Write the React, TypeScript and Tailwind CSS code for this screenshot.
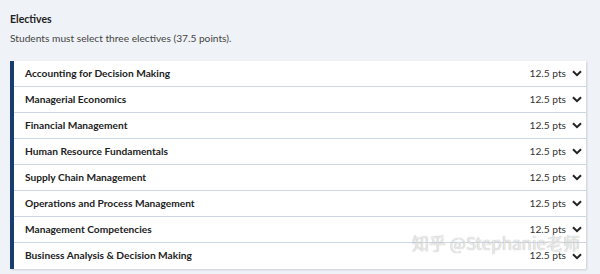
const electives = [
  "Accounting for Decision Making",
  "Managerial Economics",
  "Financial Management",
  "Human Resource Fundamentals",
  "Supply Chain Management",
  "Operations and Process Management",
  "Management Competencies",
  "Business Analysis & Decision Making",
];

function Chevron() {
  return (
    <svg width="10" height="7" viewBox="0 0 10 7" className="text-[#222]">
      <path d="M1 1.2 L5 5.2 L9 1.2" fill="none" stroke="currentColor" strokeWidth="2" />
    </svg>
  );
}

export default function App() {
  return (
    <div className="relative w-[600px] h-[274px] overflow-hidden bg-[#eff2f6] font-['Lato',sans-serif] text-[#222]">
      <div className="pl-[10px] pr-[14px] pt-[12px]">
        <div className="text-[10.5px] font-bold leading-[14px]">Electives</div>
        <div className="mt-[5px] text-[10.2px] leading-[14px] text-[#444]">
          Students must select three electives (37.5 points).
        </div>
        <div className="mt-[16px] border-l-[4px] border-[#173d6e] bg-white shadow-[1px_1px_2px_rgba(0,0,0,0.15)]">
          {electives.map((name, i) => (
            <div
              key={name}
              className={
                "flex h-[26px] items-center pl-[11px] pr-[4px] " +
                (i < electives.length - 1 ? "border-b border-[#cdd7e3]" : "")
              }
            >
              <div className="flex-1 text-[10.2px] font-bold">{name}</div>
              <div className="text-[10.2px] text-[#333]">12.5 pts</div>
              <div className="ml-[6px]">
                <Chevron />
              </div>
            </div>
          ))}
        </div>
      </div>
      <div className="absolute left-[412px] top-[233px] whitespace-nowrap text-[17px] leading-[20px] text-white/75 [text-shadow:0_0_1px_rgba(0,0,0,0.4)] font-['Noto_Sans_CJK_SC',sans-serif]">
        知乎 @Stephanie老师
      </div>
    </div>
  );
}
